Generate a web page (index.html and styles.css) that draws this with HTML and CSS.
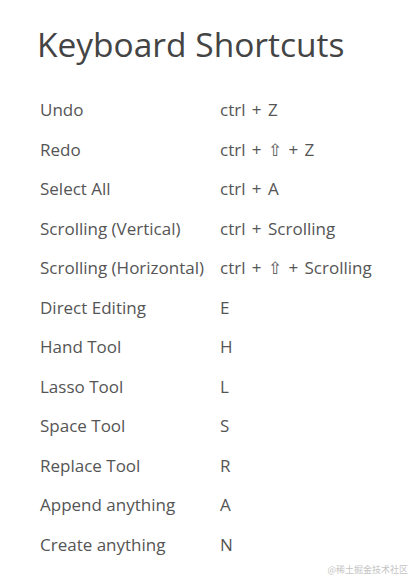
FILE: index.html
```html
<!DOCTYPE html>
<html>
<head>
<meta charset="utf-8">
<link rel="stylesheet" href="styles.css">
</head>
<body>
<div class="page">
  <h1 class="title">Keyboard Shortcuts</h1>
  <div class="shortcuts">
    <div class="name">Undo</div><div class="keys">ctrl + Z</div>
    <div class="name">Redo</div><div class="keys">ctrl + ⇧ + Z</div>
    <div class="name">Select All</div><div class="keys">ctrl + A</div>
    <div class="name">Scrolling (Vertical)</div><div class="keys">ctrl + Scrolling</div>
    <div class="name">Scrolling (Horizontal)</div><div class="keys">ctrl + ⇧ + Scrolling</div>
    <div class="name">Direct Editing</div><div class="keys">E</div>
    <div class="name">Hand Tool</div><div class="keys">H</div>
    <div class="name">Lasso Tool</div><div class="keys">L</div>
    <div class="name">Space Tool</div><div class="keys">S</div>
    <div class="name">Replace Tool</div><div class="keys">R</div>
    <div class="name">Append anything</div><div class="keys">A</div>
    <div class="name">Create anything</div><div class="keys">N</div>
  </div>
  <div class="watermark">@稀土掘金技术社区</div>
</div>
</body>
</html>
```
FILE: styles.css
```css
html, body {
  margin: 0;
  padding: 0;
  background: #fff;
}
.page {
  width: 412px;
  height: 579px;
  position: relative;
  padding: 22px 0 0 37px;
  box-sizing: border-box;
  font-family: "Open Sans", sans-serif;
}
.title {
  margin: 0;
  font-size: 33.5px;
  font-weight: 400;
  line-height: 44px;
  color: #444;
}
.shortcuts {
  margin-top: 32px;
  padding-left: 3px;
  display: grid;
  grid-template-columns: 180px auto;
  grid-auto-rows: 39.5px;
  font-size: 17px;
  color: #555;
}
.name, .keys {
  white-space: nowrap;
}
.keys {
  word-spacing: 2px;
}
.watermark {
  position: absolute;
  right: 4px;
  bottom: 3px;
  font-family: "Noto Sans CJK SC", sans-serif;
  font-size: 9px;
  color: #c4c4c4;
}
```
